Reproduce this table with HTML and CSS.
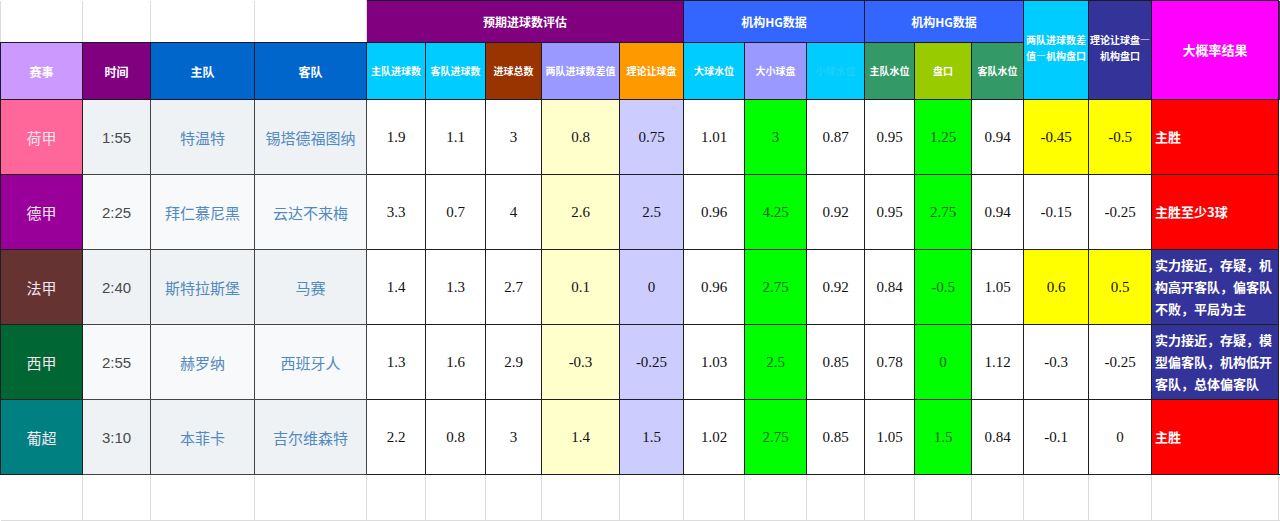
FILE: index.html
```html
<!DOCTYPE html>
<html lang="zh">
<head>
<meta charset="utf-8">
<link rel="stylesheet" href="styles.css">
</head>
<body>
<table class="sheet">
  <colgroup>
    <col class="w82"><col class="w68"><col class="w104"><col class="w112">
    <col class="w59"><col class="w60"><col class="w56"><col class="w78"><col class="w64">
    <col class="w61"><col class="w62"><col class="w58">
    <col class="w50"><col class="w57"><col class="w52">
    <col class="w65"><col class="w63"><col class="w127"><col class="w2">
  </colgroup>
  <tr class="r-group">
    <td class="blank"></td><td class="blank"></td><td class="blank"></td><td class="blank"></td>
    <th colspan="5" class="h-purple grp">预期进球数评估</th>
    <th colspan="3" class="h-blue grp">机构HG数据</th>
    <th colspan="3" class="h-blue grp">机构HG数据</th>
    <th rowspan="2" class="h-cyan sm two">两队进球数差<br>值—机构盘口</th>
    <th rowspan="2" class="h-navy sm two">理论让球盘—<br>机构盘口</th>
    <th rowspan="2" class="h-magenta big">大概率结果</th>
    <th rowspan="2" class="h-edge"></th>
  </tr>
  <tr class="r-head">
    <th class="h-lilac">赛事</th>
    <th class="h-purple">时间</th>
    <th class="h-royal">主队</th>
    <th class="h-royal">客队</th>
    <th class="h-cyan sm">主队进球数</th>
    <th class="h-cyan sm">客队进球数</th>
    <th class="h-brown sm">进球总数</th>
    <th class="h-peri sm">两队进球数差值</th>
    <th class="h-orange sm">理论让球盘</th>
    <th class="h-cyan sm">大球水位</th>
    <th class="h-peri sm">大小球盘</th>
    <th class="h-cyan sm faint">小球水位</th>
    <th class="h-sea sm">主队水位</th>
    <th class="h-olive sm">盘口</th>
    <th class="h-sea sm">客队水位</th>
  </tr>
  <tr class="r-data odd">
    <td class="lg lg-pink">荷甲</td>
    <td class="time">1:55</td>
    <td class="team">特温特</td>
    <td class="team">锡塔德福图纳</td>
    <td class="num">1.9</td><td class="num">1.1</td><td class="num">3</td>
    <td class="num c-cream">0.8</td><td class="num c-lav">0.75</td>
    <td class="num">1.01</td><td class="num c-green">3</td><td class="num">0.87</td>
    <td class="num">0.95</td><td class="num c-green">1.25</td><td class="num">0.94</td>
    <td class="num c-yellow">-0.45</td><td class="num c-yellow">-0.5</td>
    <td class="res res-red">主胜</td><td class="edge"></td>
  </tr>
  <tr class="r-data even">
    <td class="lg lg-violet">德甲</td>
    <td class="time">2:25</td>
    <td class="team">拜仁慕尼黑</td>
    <td class="team">云达不来梅</td>
    <td class="num">3.3</td><td class="num">0.7</td><td class="num">4</td>
    <td class="num c-cream">2.6</td><td class="num c-lav">2.5</td>
    <td class="num">0.96</td><td class="num c-green">4.25</td><td class="num">0.92</td>
    <td class="num">0.95</td><td class="num c-green">2.75</td><td class="num">0.94</td>
    <td class="num">-0.15</td><td class="num">-0.25</td>
    <td class="res res-red">主胜至少3球</td><td class="edge"></td>
  </tr>
  <tr class="r-data odd">
    <td class="lg lg-maroon">法甲</td>
    <td class="time">2:40</td>
    <td class="team">斯特拉斯堡</td>
    <td class="team">马赛</td>
    <td class="num">1.4</td><td class="num">1.3</td><td class="num">2.7</td>
    <td class="num c-cream">0.1</td><td class="num c-lav">0</td>
    <td class="num">0.96</td><td class="num c-green">2.75</td><td class="num">0.92</td>
    <td class="num">0.84</td><td class="num c-green">-0.5</td><td class="num">1.05</td>
    <td class="num c-yellow">0.6</td><td class="num c-yellow">0.5</td>
    <td class="res res-navy">实力接近，存疑，机<br>构高开客队，偏客队<br>不败，平局为主</td><td class="edge"></td>
  </tr>
  <tr class="r-data even">
    <td class="lg lg-forest">西甲</td>
    <td class="time">2:55</td>
    <td class="team">赫罗纳</td>
    <td class="team">西班牙人</td>
    <td class="num">1.3</td><td class="num">1.6</td><td class="num">2.9</td>
    <td class="num c-cream">-0.3</td><td class="num c-lav">-0.25</td>
    <td class="num">1.03</td><td class="num c-green">2.5</td><td class="num">0.85</td>
    <td class="num">0.78</td><td class="num c-green">0</td><td class="num">1.12</td>
    <td class="num">-0.3</td><td class="num">-0.25</td>
    <td class="res res-navy">实力接近，存疑，模<br>型偏客队，机构低开<br>客队，总体偏客队</td><td class="edge"></td>
  </tr>
  <tr class="r-data odd">
    <td class="lg lg-teal">葡超</td>
    <td class="time">3:10</td>
    <td class="team">本菲卡</td>
    <td class="team">吉尔维森特</td>
    <td class="num">2.2</td><td class="num">0.8</td><td class="num">3</td>
    <td class="num c-cream">1.4</td><td class="num c-lav">1.5</td>
    <td class="num">1.02</td><td class="num c-green">2.75</td><td class="num">0.85</td>
    <td class="num">1.05</td><td class="num c-green">1.5</td><td class="num">0.84</td>
    <td class="num">-0.1</td><td class="num">0</td>
    <td class="res res-red">主胜</td><td class="edge"></td>
  </tr>
  <tr class="r-empty">
    <td></td><td></td><td></td><td></td><td></td><td></td><td></td><td></td><td></td><td></td>
    <td></td><td></td><td></td><td></td><td></td><td></td><td></td><td></td><td></td>
  </tr>
</table>
</body>
</html>
```
FILE: styles.css
```css
html, body {
  margin: 0;
  padding: 0;
  background: #ffffff;
  overflow: hidden;
}
.sheet {
  border-collapse: collapse;
  table-layout: fixed;
  width: 1280px;
  font-family: "Noto Sans CJK SC", "Liberation Sans", sans-serif;
}
.w82 { width: 82px; } .w68 { width: 68px; } .w104 { width: 104px; } .w112 { width: 112px; }
.w59 { width: 59px; } .w60 { width: 60px; } .w56 { width: 56px; } .w78 { width: 78px; }
.w64 { width: 64px; } .w61 { width: 61px; } .w62 { width: 62px; } .w58 { width: 58px; }
.w50 { width: 50px; } .w57 { width: 57px; } .w52 { width: 52px; } .w65 { width: 65px; }
.w63 { width: 63px; } .w127 { width: 127px; } .w2 { width: 2px; }

th, td {
  padding: 0;
  text-align: center;
  vertical-align: middle;
  overflow: hidden;
  white-space: nowrap;
}
th {
  color: #ffffff;
  font-weight: 700;
  font-size: 12px;
  border: 1px solid #1a1a2a;
}
.r-group { height: 42px; }
.r-head { height: 57px; }
.r-data { height: 75px; }
.r-empty { height: 46px; }

.blank {
  border: 1px solid #dcdcdc;
  border-top: none;
  border-bottom: 1px solid #1a1a2a;
  background: #ffffff;
}
.grp { font-size: 12px; }
.sm { font-size: 10px; line-height: 16px; }
.two { padding-bottom: 4px; }
.big { font-size: 13px; padding-bottom: 2px; }
.faint { color: #1ccffc; }

.h-purple { background: #800080; }
.h-blue { background: #3366ff; }
.h-cyan { background: #00ccff; }
.h-navy { background: #333399; }
.h-magenta { background: #ff00ff; }
.h-lilac { background: #cc99ff; }
.h-royal { background: #0066cc; }
.h-brown { background: #993300; }
.h-peri { background: #9999ff; }
.h-orange { background: #ff9900; }
.h-sea { background: #339966; }
.h-olive { background: #99cc00; }
.h-edge { background: #6b1a6b; border: none; }

.r-data td {
  border: 1px solid #1f1f1f;
}
.lg {
  color: #f6e6f2;
  font-size: 15px;
  font-family: "Noto Sans CJK SC", serif;
}
.lg-pink { background: #ff6699; }
.lg-violet { background: #990099; }
.lg-maroon { background: #663333; }
.lg-forest { background: #006633; }
.lg-teal { background: #008080; }

.time {
  font-family: "Liberation Sans", Arial, sans-serif;
  font-size: 15px;
  color: #4a4a4a;
}
.team {
  font-size: 15px;
  color: #5289bf;
}
.odd .time, .odd .team { background: #eef2f4; }
.even .time, .even .team { background: #f7f9fa; }
.r-data .time, .r-data .team { border-color: #444444; }

.num {
  font-family: "Liberation Serif", "Times New Roman", serif;
  font-size: 15px;
  color: #111111;
  background: #ffffff;
}
.c-cream { background: #ffffcc; }
.c-lav { background: #ccccff; }
.c-green { background: #00ff00; color: #1b5e1b; }
.c-yellow { background: #ffff00; }

.res {
  text-align: left;
  color: #ffffff;
  font-weight: 700;
  font-size: 13px;
  line-height: 22px;
  padding-left: 3px;
}
.res-red { background: #ff0000; }
.res-navy { background: #333399; }
.r-data .edge { background: #ffffff; border: none; border-left: 1px solid #1f1f1f; }

.r-empty td {
  border: 1px solid #dcdcdc;
  border-top: 1px solid #1f1f1f;
  background: #ffffff;
}
.r-empty td:first-child { border-left: none; }
```
